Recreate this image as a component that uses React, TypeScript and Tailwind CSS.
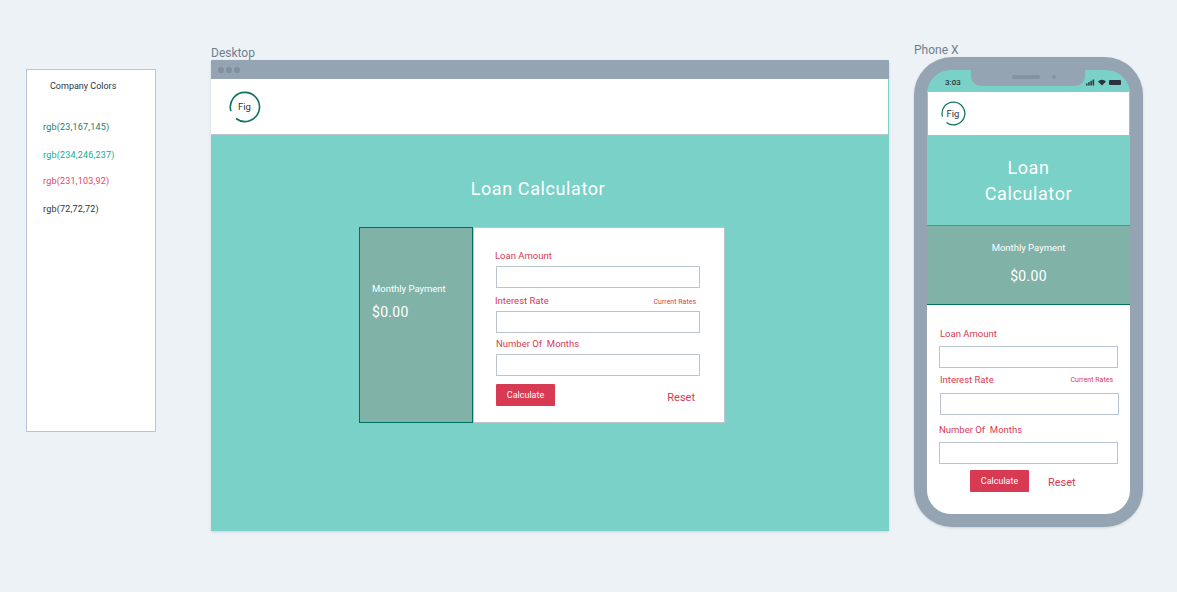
const font = { fontFamily: 'Roboto, "Liberation Sans", sans-serif' };

function FigLogo({ size }: { size: number }) {
  return (
    <div className="relative flex items-center justify-center" style={{ width: size, height: size }}>
      <svg className="absolute inset-0" width={size} height={size} viewBox="0 0 32 32" fill="none">
        <path d="M7 27.5A14.6 14.6 0 1 0 1.9 20" stroke="#11735f" strokeWidth="1.6" />
      </svg>
      <span className="pt-[2px] pr-px text-[9.5px] text-[#2c3440]">Fig</span>
    </div>
  );
}

function Field({ className }: { className: string }) {
  return <div className={`h-[22px] w-[204px] border border-[#b9c6d2] bg-white ${className}`} />;
}

function PhoneField({ className }: { className: string }) {
  return <div className={`h-[22px] w-[179px] border border-[#b9c6d2] bg-white ${className}`} />;
}

function Label({ children, className = '' }: { children: string; className?: string }) {
  return <div className={`text-[9.5px] leading-3 whitespace-pre text-[#d83a53] ${className}`}>{children}</div>;
}

function CalcButton() {
  return (
    <div className="flex h-[22px] w-[59px] items-center justify-center rounded-[1px] bg-[#d83a53] pt-px text-[9px] text-white">
      Calculate
    </div>
  );
}

export default function App() {
  return (
    <div className="relative h-[592px] w-[1177px] overflow-hidden bg-[#edf2f6]" style={font}>
      {/* Colours board */}
      <div className="absolute top-[69px] left-[26px] h-[363px] w-[130px] border border-[#b9c6d2] bg-white pl-4 tracking-[0.2px]">
        <div className="mt-[10px] ml-[7px] text-[9px] leading-3 tracking-normal text-[#2c3440]">Company Colors</div>
        <div className="mt-[29px] text-[9px] leading-3 text-[#1f7a68]">rgb(23,167,145)</div>
        <div className="mt-4 text-[9px] leading-3 text-[#10ab98]">rgb(234,246,237)</div>
        <div className="mt-[14px] text-[9px] leading-3 text-[#e0475e]">rgb(231,103,92)</div>
        <div className="mt-4 text-[9px] leading-3 text-[#2c3440]">rgb(72,72,72)</div>
      </div>

      {/* Desktop board */}
      <div className="absolute top-[46px] left-[211px] text-xs leading-[15px] text-[#6d7f8f]">Desktop</div>
      <div className="absolute top-[60px] left-[211px] flex h-[471px] w-[678px] flex-col bg-[#79d1c7] shadow-sm">
        <div className="flex h-[19px] items-center gap-[2px] rounded-t-[2px] bg-[#94a4b2] pl-[7px]">
          <span className="h-[6px] w-[6px] rounded-full bg-[#7f8f9e]" />
          <span className="h-[6px] w-[6px] rounded-full bg-[#7f8f9e]" />
          <span className="h-[6px] w-[6px] rounded-full bg-[#7f8f9e]" />
        </div>
        <div className="flex h-[56px] items-center border-r border-b border-r-[#79d1c7] border-b-[#b9c6d2] bg-white pl-[18px]">
          <FigLogo size={32} />
        </div>
        <div className="mt-[43px] pr-6 text-center text-lg leading-[22px] tracking-[0.6px] text-white">Loan Calculator</div>
        <div className="mt-[27px] ml-[148px] flex h-[196px] w-[366px]">
          <div className="w-[114px] border border-[#00735f] bg-[#80b2a8] pt-[55px] pl-3 text-white">
            <div className="text-[9.5px] leading-3">Monthly Payment</div>
            <div className="mt-[9px] text-sm leading-4 tracking-[0.3px]">$0.00</div>
          </div>
          <div className="relative flex-1 border border-[#b9c6d2] bg-white pt-[22px] pl-[21px]">
            <Label>Loan Amount</Label>
            <Field className="mt-1 ml-px" />
            <div className="mt-[7px] flex w-[201px] items-end justify-between">
              <Label>Interest Rate</Label>
              <span className="text-[7px] leading-[10px] text-[#d83a53]">Current Rates</span>
            </div>
            <Field className="mt-[4px] ml-px" />
            <Label className="mt-[5px] ml-px">Number Of  Months</Label>
            <Field className="mt-[4px] ml-px" />
            <div className="mt-2 ml-px flex w-[198px] items-center justify-between">
              <CalcButton />
              <span className="mt-[6px] mr-[-1px] text-[11px] text-[#d83a53]">Reset</span>
            </div>
          </div>
        </div>
      </div>

      {/* Phone board */}
      <div className="absolute top-[43px] left-[914px] text-xs leading-[15px] text-[#6d7f8f]">Phone X</div>
      <div className="absolute top-[57px] left-[914px] h-[470px] w-[229px] rounded-[38px] bg-[#94a4b2] p-[13px] shadow-sm">
        <div className="relative flex h-[444px] flex-col overflow-hidden rounded-[24px] bg-[#79d1c7]">
          {/* notch */}
          <div className="absolute top-0 left-[44px] flex h-[16px] w-[114px] items-center justify-center gap-[4px] rounded-b-[10px] bg-[#94a4b2] pb-[2px] pl-3">
            <span className="h-1 w-7 rounded-full bg-[#84939f]" />
            <span className="ml-2 h-1 w-1 rounded-full bg-[#84939f]" />
          </div>
          {/* status bar */}
          <div className="flex h-[21px] shrink-0 items-center justify-between pt-[4px] pr-[8px] pl-[18px]">
            <span className="text-[8px] leading-none font-medium text-[#2c3440]">3:03</span>
            <svg width="36" height="7" viewBox="0 0 36 7" fill="#2c3440">
              <rect x="0" y="4.5" width="1.5" height="2" />
              <rect x="2.2" y="3.2" width="1.5" height="3.3" />
              <rect x="4.4" y="1.8" width="1.5" height="4.7" />
              <rect x="6.6" y="0.5" width="1.5" height="6" />
              <path d="M16 6.5L12 2.5a5.6 5.6 0 0 1 8 0z" />
              <rect x="23" y="1" width="12" height="5" rx="1" />
            </svg>
          </div>
          <div className="flex h-[45px] shrink-0 items-center border border-[#79d1c7] bg-white pl-[13px]">
            <FigLogo size={25} />
          </div>
          <div className="flex h-[89px] shrink-0 flex-col items-center justify-center pt-px text-lg leading-[26px] tracking-[0.6px] text-white">
            <span>Loan</span>
            <span>Calculator</span>
          </div>
          <div className="flex h-[80px] shrink-0 flex-col items-center border-y border-t-[#5f8f86] border-b-[#00735f] bg-[#80b2a8] pt-4 text-white">
            <div className="text-[9.5px] leading-3">Monthly Payment</div>
            <div className="mt-[14px] text-sm leading-4 tracking-[0.3px]">$0.00</div>
          </div>
          <div className="flex-1 bg-white pt-[23px] pl-3">
            <Label className="ml-px">Loan Amount</Label>
            <PhoneField className="mt-[6px]" />
            <div className="mt-[6px] ml-px flex w-[173px] items-center justify-between">
              <Label>Interest Rate</Label>
              <span className="text-[7px] leading-[10px] text-[#d83a53]">Current Rates</span>
            </div>
            <PhoneField className="mt-[7px] ml-px" />
            <Label className="mt-2 pt-px">Number Of  Months</Label>
            <PhoneField className="mt-[6px]" />
            <div className="mt-[6px] ml-[31px] flex items-center gap-[19px]">
              <CalcButton />
              <span className="mt-[5px] text-[11px] text-[#d83a53]">Reset</span>
            </div>
          </div>
        </div>
      </div>
    </div>
  );
}
